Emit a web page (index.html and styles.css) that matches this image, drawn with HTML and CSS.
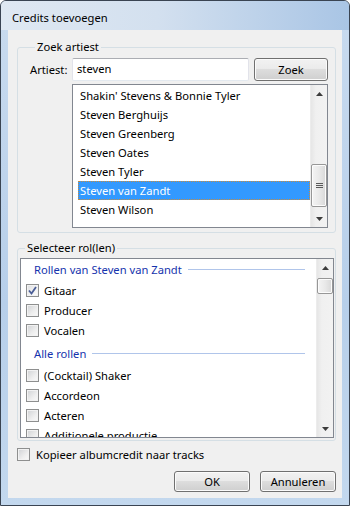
FILE: index.html
```html
<!DOCTYPE html>
<html lang="nl">
<head>
	<meta charset="UTF-8">
	<title>Credits toevoegen</title>
	<link rel="stylesheet" href="styles.css">
</head>
<body>
	<div class="window">
		<div class="titlebar">Credits toevoegen</div>
		<div class="client">
			<!-- artiest zoeken -->
			<fieldset class="group group-search">
				<legend>Zoek artiest</legend>
				<div class="search-row">
					<label class="search-label">Artiest:</label>
					<div class="textbox">steven</div>
					<button class="btn btn-search">Zoek</button>
				</div>
				<div class="listbox artist-list">
					<ul class="items">
						<li>Shakin' Stevens &amp; Bonnie Tyler</li>
						<li>Steven Berghuijs</li>
						<li>Steven Greenberg</li>
						<li>Steven Oates</li>
						<li>Steven Tyler</li>
						<li class="selected">Steven van Zandt</li>
						<li>Steven Wilson</li>
					</ul>
					<div class="scrollbar">
						<div class="sb-btn">
							<svg width="7" height="4" viewBox="0 0 7 4"><path d="M0 4 L3.5 0 L7 4 Z" fill="#3c3c3c"/></svg>
						</div>
						<div class="sb-track">
							<div class="sb-thumb thumb-artist">
								<svg width="7" height="7" viewBox="0 0 7 7">
									<path d="M0 1.5h7M0 3.5h7M0 5.5h7" stroke="#5a5a5a" stroke-width="1"/>
								</svg>
							</div>
						</div>
						<div class="sb-btn">
							<svg width="7" height="4" viewBox="0 0 7 4"><path d="M0 0 L7 0 L3.5 4 Z" fill="#3c3c3c"/></svg>
						</div>
					</div>
				</div>
			</fieldset>

			<!-- rollen -->
			<fieldset class="group group-roles">
				<legend>Selecteer rol(len)</legend>
				<div class="listbox role-list">
					<div class="roles">
						<div class="role-header first"><span>Rollen van Steven van Zandt</span></div>
						<div class="role"><span class="check checked"><svg width="9" height="9" viewBox="0 0 9 9"><path d="M1 4.5 L3.5 7.5 L8 1" fill="none" stroke="#4a5d96" stroke-width="1.8"/></svg></span>Gitaar</div>
						<div class="role"><span class="check"></span>Producer</div>
						<div class="role"><span class="check"></span>Vocalen</div>
						<div class="role-header"><span>Alle rollen</span></div>
						<div class="role"><span class="check"></span>(Cocktail) Shaker</div>
						<div class="role"><span class="check"></span>Accordeon</div>
						<div class="role"><span class="check"></span>Acteren</div>
						<div class="role"><span class="check"></span>Additionele productie</div>
					</div>
					<div class="scrollbar">
						<div class="sb-btn">
							<svg width="7" height="4" viewBox="0 0 7 4"><path d="M0 4 L3.5 0 L7 4 Z" fill="#3c3c3c"/></svg>
						</div>
						<div class="sb-track">
							<div class="sb-thumb thumb-roles"></div>
						</div>
						<div class="sb-btn">
							<svg width="7" height="4" viewBox="0 0 7 4"><path d="M0 0 L7 0 L3.5 4 Z" fill="#3c3c3c"/></svg>
						</div>
					</div>
				</div>
			</fieldset>

			<div class="copy-row"><span class="check"></span>Kopieer albumcredit naar tracks</div>

			<div class="button-row">
				<button class="btn">OK</button>
				<button class="btn">Annuleren</button>
			</div>
		</div>
	</div>
</body>
</html>
```

FILE: styles.css
```css
* {
	margin: 0;
	padding: 0;
	box-sizing: border-box;
}

body {
	background: #fff;
	font: 11.2px "Noto Sans", "Liberation Sans", sans-serif;
	color: #000;
}

.window {
	width: 350px;
	height: 506px;
	display: flex;
	flex-direction: column;
	padding: 0 7px 7px 7px;
	border: 1px solid #3a4452;
	border-radius: 6px 6px 0 0;
	background: linear-gradient(to bottom, #c9dbef, #b7cfea 60%, #c3d8ee);
}

.titlebar {
	height: 29px;
	line-height: 26px;
	padding-top: 4px;
	margin: 0 -7px;
	padding-left: 11px;
	background: linear-gradient(to right, #dfe8f2 0%, #d3e0ef 45%, #a9c5e5 100%);
	border-radius: 5px 5px 0 0;
}

.client {
	flex: 1;
	display: flex;
	flex-direction: column;
	background: #f0f0f0;
}

/* groepen */
.group {
	border: 1px solid #d5dfe5;
	border-radius: 3px;
	margin: 9px 6px 0 9px;
}

.group legend {
	margin-left: 5px;
	padding: 0 2px;
	line-height: 16px;
}

.group-search {
	padding: 3px 7px 4px 12px;
}

.group-roles {
	margin-top: 7px;
	padding: 2px 1px 2px 2px;
}

.search-row {
	display: flex;
	align-items: center;
	height: 23px;
	gap: 5px;
}

.search-label {
	width: 37px;
}

.textbox {
	flex: 1;
	height: 23px;
	line-height: 20px;
	padding-left: 4px;
	background: #fff;
	border: 1px solid #e2e3ea;
	border-top-color: #abadb3;
	border-bottom-color: #e3e9ef;
	border-radius: 2px;
}

.btn {
	font: inherit;
	color: #000;
	height: 21px;
	width: 76px;
	border: 1px solid #707070;
	border-radius: 3px;
	background: linear-gradient(to bottom, #f2f2f2 0%, #ebebeb 45%, #dddddd 50%, #cfcfcf 100%);
	box-shadow: inset 0 0 0 1px #fbfbfb;
}

.btn-search {
	height: 23px;
	width: 74px;
}

/* lijsten */
.listbox {
	display: flex;
	background: #fff;
	border: 1px solid #828790;
}

.artist-list {
	height: 144px;
	margin: 3px 0 0 42px;
}

.items {
	flex: 1;
	list-style: none;
	padding: 1px 0 0 5px;
}

.items li {
	height: 19px;
	line-height: 19px;
	padding-left: 2px;
	white-space: nowrap;
}

.items li.selected {
	background: #3399ff;
	color: #fff;
	border: 1px dotted #c98b3e;
	padding-left: 1px;
	line-height: 17px;
}

.role-list {
	height: 180px;
}

.roles {
	flex: 1;
	overflow: hidden;
	padding-left: 5px;
}

.role-header {
	display: flex;
	align-items: center;
	height: 25px;
	padding: 2px 11px 0 8px;
	color: #1533ad;
}

.role-header.first {
	height: 21px;
	padding-top: 0;
}

.role-header::after {
	content: "";
	flex: 1;
	height: 1px;
	margin-left: 6px;
	background: #b0c5ea;
}

.role {
	display: flex;
	align-items: center;
	height: 20px;
	gap: 5px;
	white-space: nowrap;
}

.check {
	width: 13px;
	height: 13px;
	flex: none;
	display: flex;
	align-items: center;
	justify-content: center;
	border: 1px solid #8e8f8f;
	background: linear-gradient(135deg, #cfd1d4 0%, #eeeeee 60%, #fafafa 100%);
	box-shadow: inset 0 0 0 1px #f2f2f2;
}

.check.checked {
	background: linear-gradient(135deg, #dcdde0 0%, #f3f3f3 60%, #fdfdfd 100%);
}

/* schuifbalk */
.scrollbar {
	width: 17px;
	display: flex;
	flex-direction: column;
	background: linear-gradient(to right, #e6e6e6 0%, #f0f0f0 30%, #f2f2f2 100%);
	border-left: 1px solid #ececec;
}

.sb-btn {
	height: 17px;
	display: flex;
	align-items: center;
	justify-content: center;
}

.sb-track {
	flex: 1;
}

.sb-thumb {
	border: 1px solid #979797;
	border-radius: 2px;
	background: linear-gradient(to right, #f4f4f4 0%, #e9e9e9 50%, #d8d8d8 100%);
	box-shadow: inset 0 0 0 1px #fcfcfc;
	display: flex;
	align-items: center;
	justify-content: center;
}

.thumb-artist {
	margin-top: 62px;
	height: 43px;
}

.thumb-roles {
	margin-top: 2px;
	height: 16px;
}

/* onderkant */
.copy-row {
	display: flex;
	align-items: center;
	gap: 6px;
	height: 15px;
	margin: 6px 0 0 9px;
}

.button-row {
	display: flex;
	justify-content: flex-end;
	gap: 10px;
	margin: 9px 6px 0 0;
}
```
